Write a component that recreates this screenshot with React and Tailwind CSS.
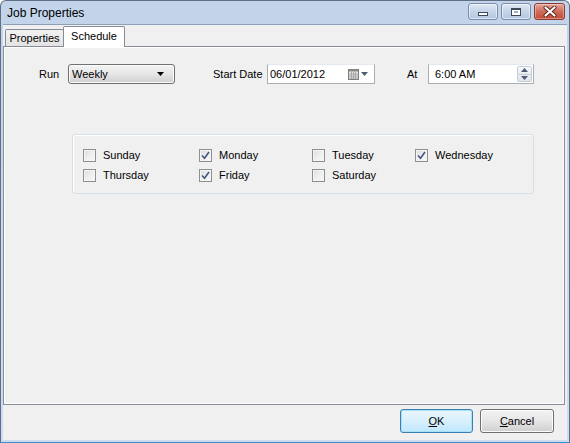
import React from "react";

const font = { fontFamily: '"Liberation Sans", Arial, sans-serif' };

function Check({ checked, label }) {
  return (
    <div className="flex items-center gap-[7px] h-[20px]">
      <div className="w-[13px] h-[13px] border border-[#8e8f8f] bg-gradient-to-br from-[#dcdcdc] via-[#eeeeee] to-[#fafafa] flex items-center justify-center shadow-[inset_0_0_0_1px_#f4f4f4]">
        {checked && (
          <svg width="9" height="9" viewBox="0 0 9 9">
            <path d="M1 4.5 L3.5 7.2 L8 1" stroke="#44557f" strokeWidth="1.6" fill="none" />
          </svg>
        )}
      </div>
      <span className="text-[11px] text-black leading-none">{label}</span>
    </div>
  );
}

function CapBtn({ children, close }) {
  return (
    <div
      className={
        "h-[17px] rounded-[3px] border flex items-center justify-center " +
        (close
          ? "w-[31px] border-[#8a3a30] bg-gradient-to-b from-[#e3a89c] via-[#cf6b58] to-[#c24a36] shadow-[inset_0_0_0_1px_rgba(255,255,255,0.35)]"
          : "w-[30px] border-[#7b8ca6] bg-gradient-to-b from-[#dfe8f4] via-[#c5d4e8] to-[#b5c7df] shadow-[inset_0_0_0_1px_rgba(255,255,255,0.55)]")
      }
    >
      {children}
    </div>
  );
}

export default function App() {
  return (
    <div style={font} className="w-[570px] h-[443px] flex flex-col bg-gradient-to-b from-[#c3d4ea] to-[#cddcf0] border border-[#5e6f86] border-b-[#3d8fc7] rounded-t-[6px] overflow-hidden">
      {/* title bar */}
      <div className="h-[23px] flex items-center pl-[6px] pr-[4px]">
        <span className="text-[12px] text-black flex-1">Job Properties</span>
        <div className="flex items-start gap-[3px] pb-[2px]">
          <CapBtn>
            <div className="w-[10px] h-[4px] bg-white border border-[#3c4a5c] mt-[4px]" />
          </CapBtn>
          <CapBtn>
            <div className="w-[10px] h-[8px] bg-white border border-[#3c4a5c] border-t-2 flex items-center justify-center">
              <div className="w-[4px] h-[2px] bg-[#9fb2cc]" />
            </div>
          </CapBtn>
          <CapBtn close>
            <svg width="14" height="11" viewBox="0 0 14 11">
              <path d="M2.5 1.5 L11.5 9.5 M11.5 1.5 L2.5 9.5" stroke="#5a2018" strokeWidth="4" strokeLinecap="round" />
              <path d="M2.5 1.5 L11.5 9.5 M11.5 1.5 L2.5 9.5" stroke="#ffffff" strokeWidth="2.2" strokeLinecap="round" />
            </svg>
          </CapBtn>
        </div>
      </div>

      {/* client */}
      <div className="flex-1 ml-[2px] mr-[2px] mb-[2px] bg-[#f0f0f0] border-t border-[#8da0b8] flex flex-col">
        {/* tabs */}
        <div className="h-[21px] flex items-end pl-[2px] relative z-10">
          <div className="w-[59px] h-[17px] flex items-center justify-center border border-b-0 border-[#898c95] bg-gradient-to-b from-[#f2f2f2] to-[#e3e3e3] text-[11px] rounded-t-[2px]">
            Properties
          </div>
          <div className="w-[62px] h-[21px] -mb-[1px] flex items-center justify-center border border-b-0 border-[#898c95] bg-white text-[11px] -ml-[1px] pb-[2px] rounded-t-[2px]">
            Schedule
          </div>
        </div>
        {/* panel */}
        <div className="h-[359px] mr-[2px] border border-[#898c95] shadow-[inset_1px_-1px_0_#ffffff,inset_-1px_1px_0_#ffffff] bg-[#f0f0f0] flex flex-col">
          <div className="flex items-center mt-[17px] text-[11px] text-black">
            <span className="ml-[35px] w-[29px]">Run</span>
            <div className="w-[107px] h-[20px] rounded-[3px] border border-[#707070] bg-gradient-to-b from-[#f4f4f4] via-[#e6e6e6] to-[#cfcfcf] flex items-center pl-[3px] pr-[10px] shadow-[inset_0_0_0_1px_#fbfbfb]">
              <span className="flex-1 text-[#000]">Weekly</span>
              <svg width="7" height="4" viewBox="0 0 7 4"><path d="M0 0 H7 L3.5 4 Z" fill="#000" /></svg>
            </div>
            <span className="ml-[38px] w-[54px]">Start Date</span>
            <div className="w-[108px] h-[20px] border border-[#abadb3] border-t-[#e3e9ef] bg-white flex items-center pl-[2px] pr-[6px]">
              <span className="flex-1">06/01/2012</span>
              <svg width="11" height="11" viewBox="0 0 11 11" className="mr-[2px]">
                <rect x="0.5" y="0.5" width="10" height="10" fill="#e8e8e8" stroke="#7d7d7d" />
                <rect x="0.5" y="0.5" width="10" height="2" fill="#8a8a8a" />
                <path d="M3.5 3 V10 M5.5 3 V10 M7.5 3 V10 M1 5 H10 M1 7 H10 M1 9 H10" stroke="#a9a9a9" strokeWidth="1" />
              </svg>
              <svg width="7" height="4" viewBox="0 0 7 4"><path d="M0 0 H7 L3.5 4 Z" fill="#4d5a73" /></svg>
            </div>
            <span className="ml-[32px] w-[21px]">At</span>
            <div className="w-[106px] h-[20px] border border-[#abadb3] border-t-[#e3e9ef] bg-white flex items-center pl-[6px] pr-[1px]">
              <span className="flex-1">6:00 AM</span>
              <div className="w-[15px] h-[16px] flex flex-col">
                <div className="flex-1 border border-[#c5ccd6] bg-gradient-to-b from-[#f7f8fa] to-[#e9ecf1] flex items-center justify-center rounded-t-[2px]">
                  <svg width="7" height="4" viewBox="0 0 7 4"><path d="M0 4 H7 L3.5 0 Z" fill="#4d5a73" /></svg>
                </div>
                <div className="flex-1 border border-t-0 border-[#c5ccd6] bg-gradient-to-b from-[#eceff3] to-[#e0e5eb] flex items-center justify-center rounded-b-[2px]">
                  <svg width="7" height="4" viewBox="0 0 7 4"><path d="M0 0 H7 L3.5 4 Z" fill="#4d5a73" /></svg>
                </div>
              </div>
            </div>
          </div>

          <div className="ml-[68px] mt-[50px] w-[462px] h-[60px] border border-[#d5dfe5] rounded-[3px] shadow-[inset_1px_1px_0_#ffffff] pl-[10px] pt-[10px] grid grid-cols-[116px_113px_103px_auto] auto-rows-[20px]">
            <Check label="Sunday" />
            <Check label="Monday" checked />
            <Check label="Tuesday" />
            <Check label="Wednesday" checked />
            <Check label="Thursday" />
            <Check label="Friday" checked />
            <Check label="Saturday" />
          </div>
        </div>

        {/* footer */}
        <div className="flex-1 flex items-start justify-end pt-[4px] pr-[13px] gap-[7px] text-[11px]">
          <div className="w-[73px] h-[24px] rounded-[3px] border border-[#3c7fb1] bg-gradient-to-b from-[#eaf6fd] via-[#d9f0fc] to-[#bee6fd] flex items-center justify-center shadow-[inset_0_0_0_1px_#a8e0f8]">
            <span><u>O</u>K</span>
          </div>
          <div className="w-[74px] h-[24px] rounded-[3px] border border-[#707070] bg-gradient-to-b from-[#f2f2f2] via-[#e6e6e6] to-[#cfcfcf] flex items-center justify-center shadow-[inset_0_0_0_1px_#fcfcfc]">
            <span><u>C</u>ancel</span>
          </div>
        </div>
      </div>
    </div>
  );
}
